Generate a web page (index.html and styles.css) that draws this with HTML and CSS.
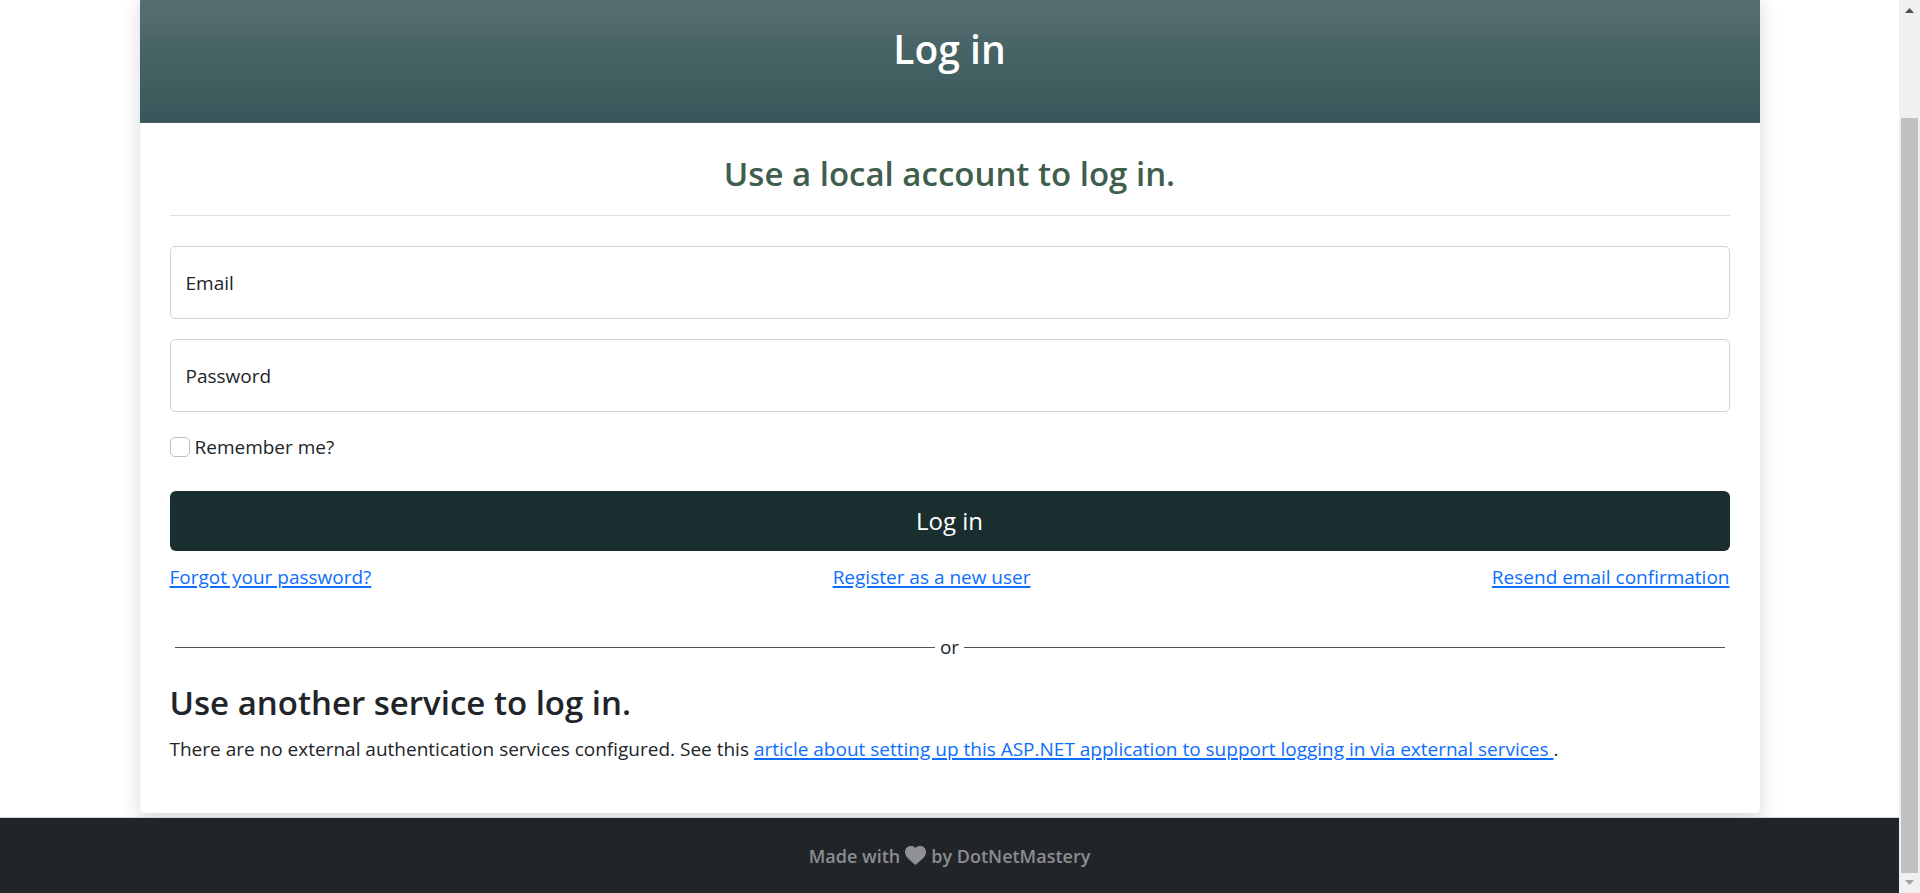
FILE: index.html
```html
<!DOCTYPE html>
<html lang="en">
<head>
<meta charset="utf-8">
<meta name="viewport" content="width=device-width, initial-scale=1">
<title>Log in</title>
<link rel="stylesheet" href="styles.css">
</head>
<body>
<div class="page">
  <main class="container">
    <div class="card">
      <header class="card-header"><h1 class="title">Log in</h1></header>
      <div class="card-body">
        <form>
          <h2 class="subtitle centered">Use a local account to log in.</h2>
          <hr class="divider">
          <div class="field">
            <input class="field-input" id="email" type="email" autocomplete="username">
            <label class="field-label" for="email">Email</label>
          </div>
          <div class="field">
            <input class="field-input" id="password" type="password" autocomplete="current-password">
            <label class="field-label" for="password">Password</label>
          </div>
          <div class="remember">
            <input class="checkbox" id="remember" type="checkbox">
            <label for="remember">Remember me?</label>
          </div>
          <button class="submit" type="submit">Log in</button>
          <nav class="links">
            <a href="#forgot">Forgot your password?</a>
            <a href="#register">Register as a new user</a>
            <a href="#resend">Resend email confirmation</a>
          </nav>
        </form>
        <div class="or"><span>or</span></div>
        <section>
          <h2 class="subtitle">Use another service to log in.</h2>
          <p class="note">There are no external authentication services configured. See this <a href="#article">article about setting up this ASP.NET application to support logging in via external services </a>.</p>
        </section>
      </div>
    </div>
  </main>
  <footer class="footer">
    <span>Made with</span>
    <svg class="heart" viewBox="0 0 21 19" aria-hidden="true"><path d="M10.500 2C9.200.6 7.600 0 5.800 0 2.400 0 0 2.700 0 6.200c0 5.200 5.600 8.200 10.500 12.800C15.400 14.400 21 11.400 21 6.200 21 2.700 18.600 0 15.200 0c-1.800 0-3.400.6-4.700 2z"/></svg>
    <span>by DotNetMastery</span>
  </footer>
</div>
<div class="scrollbar" aria-hidden="true">
  <svg class="arrow up" viewBox="0 0 9 5"><path d="M0 5 4.500 0 9 5z"/></svg>
  <div class="thumb"></div>
  <svg class="arrow down" viewBox="0 0 9 5"><path d="M0 0 4.500 5 9 0z"/></svg>
</div>
</body>
</html>
```
FILE: styles.css
```css
* { box-sizing: border-box; }

body {
  margin: 0;
  min-height: 100vh;
  display: flex;
  overflow: hidden;
  background: #fff;
  color: #212529;
  font: 400 19px/30px "Open Sans", "Noto Sans", sans-serif;
}

a { color: #0d6efd; text-decoration-thickness: 2px; text-underline-offset: 2px; }

.page { flex: 1; min-width: 0; display: flex; flex-direction: column; }

.container { width: 100%; max-width: 1650px; margin: 0 auto; padding: 0 15px 4px; }

.card {
  margin-top: -10px;
  border-radius: 5px;
  background: #fff;
  box-shadow: 0 10px 20px rgba(0, 0, 0, .15);
}

.card-header {
  padding: 35px 30px 49px;
  border-bottom: 1px solid #46626a;
  background: linear-gradient(#577073, #4f686b 33%, #4a6668 35%, #39575a);
  color: #fff;
  text-align: center;
}

.title { margin: 0; font-size: 39px; line-height: 48px; font-weight: 600; }

.card-body { padding: 30px 30px 49px; }

.subtitle { margin: 0; font-size: 33px; line-height: 42px; font-weight: 600; }
.centered { color: #3f5e4d; text-align: center; }

.divider { margin: 20px 0 30px; border: 0; border-top: 1px solid #dee0e1; }

.field { position: relative; margin-bottom: 20px; }

.field-input {
  display: block;
  width: 100%;
  height: 73px;
  padding: 20px 15px;
  border: 1px solid #ced4da;
  border-radius: 5px;
  background: #fff;
  color: inherit;
  font: inherit;
}

.field-label { position: absolute; left: 16px; top: 22px; pointer-events: none; }

.remember { display: flex; align-items: center; gap: 5px; margin: 20px 0 29px; }

.checkbox {
  appearance: none;
  width: 20px;
  height: 20px;
  margin: 0;
  border: 1px solid #bfbfbf;
  border-radius: 5px;
  background: #fff;
}
.checkbox:checked { background: #0d6efd; }

.submit {
  display: block;
  width: 100%;
  padding: 11px 20px;
  border: 0;
  border-radius: 6px;
  background: #1a2e30;
  color: #fff;
  font: inherit;
  font-size: 24px;
  line-height: 38px;
}

.links { display: flex; justify-content: space-between; padding-top: 11px; }

.or { display: flex; align-items: center; gap: 5px; margin: 40px 5px 20px; }
.or::before, .or::after { content: ""; flex: 1; border-top: 1px solid #4f5254; }

.note { margin: 10px 0 0; }

.footer {
  flex: 1;
  display: flex;
  justify-content: center;
  align-items: center;
  gap: 5px;
  padding: 20px;
  border-top: 1px solid #ced4da;
  background: #212529;
  color: #8b8d8f;
  font-size: 18px;
  font-weight: 600;
  position: relative;
}

.heart { width: 21px; height: 19px; fill: #8f9194; }

.scrollbar {
  width: 21px;
  display: flex;
  flex-direction: column;
  align-items: center;
  padding: 8px 2px;
  background: #f0f0f0;
}

.arrow { width: 9px; height: 5px; }
.up { fill: #505050; }
.down { fill: #a3a3a3; }
.thumb { flex: 1; width: 17px; margin: 105px 0 7px; background: #c1c1c1; }
```
